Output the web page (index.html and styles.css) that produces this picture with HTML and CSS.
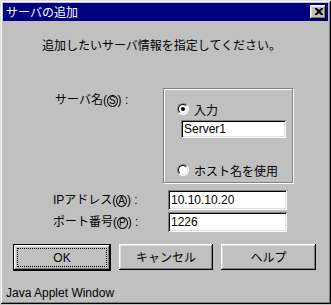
FILE: index.html
```html
<!DOCTYPE html>
<html lang="ja">
<head>
<meta charset="utf-8">
<link rel="stylesheet" href="styles.css">
</head>
<body>
<div class="window">
  <div class="titlebar">
    <span class="title">サーバの追加</span>
    <span class="close"><svg width="8" height="7" viewBox="0 0 8 7"><path d="M0 0h2l2 2 2-2h2v1l-2.5 2.5L8 6v1H6L4 5 2 7H0V6l2.5-2.5L0 1z" fill="#000"/></svg></span>
  </div>
  <div class="client">
    <div class="intro">追加したいサーバ情報を指定してください。</div>
    <div class="server-row">
      <div class="label server-label">サーバ名(<u>S</u>) :</div>
      <div class="group">
        <div class="opt opt1"><span class="radio checked"></span><span>入力</span></div>
        <div class="field server-field">Server1</div>
        <div class="opt opt2"><span class="radio"></span><span>ホスト名を使用</span></div>
      </div>
    </div>
    <div class="row ip-row">
      <div class="label">IPアドレス(<u>A</u>) :</div>
      <div class="field wide">10.10.10.20</div>
    </div>
    <div class="row port-row">
      <div class="label">ポート番号(<u>P</u>) :</div>
      <div class="field wide">1226</div>
    </div>
    <div class="buttons">
      <div class="btn default"><span class="focus">OK</span></div>
      <div class="btn cancel">キャンセル</div>
      <div class="btn help">ヘルプ</div>
    </div>
    <div class="status">Java Applet Window</div>
  </div>
</div>
</body>
</html>
```
FILE: styles.css
```css
html, body {
  margin: 0;
  padding: 0;
  background: #c0c0c0;
}
body {
  font-family: "Liberation Sans", "Noto Sans CJK JP", sans-serif;
  font-size: 12px;
  color: #000;
}
.window {
  width: 331px;
  height: 304px;
  box-sizing: border-box;
  padding: 3px;
  background: #c0c0c0;
  box-shadow: inset 1px 1px #dfdfdf, inset -1px -1px #000, inset 2px 2px #fff, inset -2px -2px #808080;
  display: flex;
  flex-direction: column;
}
.titlebar {
  height: 18px;
  background: #000080;
  color: #fff;
  display: flex;
  align-items: center;
  justify-content: space-between;
  padding: 0 2px 0 3px;
}
.title {
  font-family: "Noto Sans CJK JP", sans-serif;
  font-size: 12px;
  line-height: 14px;
}
.close {
  width: 16px;
  height: 14px;
  box-sizing: border-box;
  background: #c0c0c0;
  box-shadow: inset -1px -1px #000, inset 1px 1px #fff, inset -2px -2px #808080, inset 2px 2px #dfdfdf;
  display: flex;
  align-items: center;
  justify-content: center;
  padding-left: 1px;
  padding-bottom: 1px;
}
.client {
  display: flex;
  flex-direction: column;
}
.intro {
  margin-top: 17px;
  line-height: 14px;
  text-align: center;
  font-family: "Noto Sans CJK JP", sans-serif;
  padding-right: 8px;
}
.label {
  font-family: "Liberation Sans", "Noto Sans CJK JP", sans-serif;
  line-height: 14px;
}
.label u {
  text-decoration: none;
  border: 1px solid #000;
  border-radius: 50%;
  font-size: 10px;
  line-height: 10px;
  padding: 0 1px;
  display: inline-block;
}
.server-row {
  margin-top: 36px;
  display: flex;
  padding-left: 52px;
}
.server-label {
  width: 108px;
  margin-top: 5px;
}
.group {
  width: 130px;
  height: 95px;
  box-sizing: border-box;
  border: 1px solid #808080;
  box-shadow: 1px 1px 0 #fff, inset 1px 1px 0 #fff;
  display: flex;
  flex-direction: column;
  padding: 13px 0 0 13px;
}
.opt {
  display: flex;
  align-items: center;
  gap: 5px;
  height: 14px;
  font-family: "Noto Sans CJK JP", sans-serif;
}
.radio {
  width: 12px;
  height: 12px;
  box-sizing: border-box;
  border-radius: 50%;
  background: #fff;
  border: 1px solid;
  border-color: #808080 #fff #fff #808080;
  position: relative;
}
.radio::before {
  content: "";
  position: absolute;
  inset: 0;
  border-radius: 50%;
  border: 1px solid;
  border-color: #000 #dfdfdf #dfdfdf #000;
}
.radio.checked::after {
  content: "";
  position: absolute;
  left: 3px;
  top: 3px;
  width: 4px;
  height: 4px;
  border-radius: 50%;
  background: #000;
}
.field {
  background: #fff;
  box-sizing: border-box;
  box-shadow: inset 1px 1px #808080, inset -1px -1px #fff, inset 2px 2px #000, inset -2px -2px #dfdfdf;
  padding: 2px 3px;
  line-height: 14px;
  font-family: "Liberation Sans", sans-serif;
}
.server-field {
  width: 105px;
  height: 18px;
  margin: 4px 0 0 4px;
}
.opt2 {
  margin-top: 25px;
}
.row {
  display: flex;
  align-items: center;
  padding-left: 50px;
}
.row .label {
  width: 115px;
}
.wide {
  width: 119px;
  height: 20px;
  padding-top: 3px;
}
.ip-row {
  margin-top: 7px;
}
.port-row {
  margin-top: 2px;
}
.buttons {
  margin-top: 12px;
  display: flex;
  padding-left: 10px;
  gap: 8px;
  align-items: flex-start;
}
.btn {
  height: 26px;
  box-sizing: border-box;
  background: #c0c0c0;
  box-shadow: inset -1px -1px #000, inset 1px 1px #fff, inset -2px -2px #808080, inset 2px 2px #dfdfdf;
  display: flex;
  align-items: center;
  justify-content: center;
  font-family: "Noto Sans CJK JP", sans-serif;
  line-height: 14px;
}
.default {
  width: 98px;
  height: 27px;
  border: 1px solid #000;
  box-shadow: inset -1px -1px #000, inset 1px 1px #fff, inset -2px -2px #808080, inset 2px 2px #dfdfdf;
  padding: 3px;
}
.focus {
  flex: 1;
  align-self: stretch;
  border: 1px dotted #000;
  display: flex;
  align-items: center;
  justify-content: center;
  font-family: "Liberation Sans", sans-serif;
}
.cancel {
  width: 94px;
}
.help {
  width: 95px;
}
.status {
  margin-top: 15px;
  padding-left: 3px;
  line-height: 14px;
  font-family: "Liberation Sans", sans-serif;
}
```
